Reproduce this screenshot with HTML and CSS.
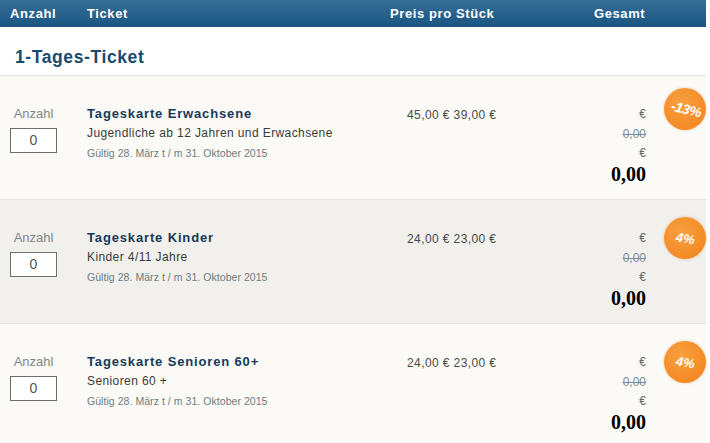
FILE: index.html
```html
<!DOCTYPE html>
<html lang="de">
<head>
<meta charset="utf-8">
<title>Tickets</title>
<link rel="stylesheet" href="styles.css">
</head>
<body>
<div class="page">
  <div class="thead">
    <div class="th">Anzahl</div>
    <div class="th">Ticket</div>
    <div class="th">Preis pro Stück</div>
    <div class="th">Gesamt</div>
  </div>
  <h2 class="group">1-Tages-Ticket</h2>

  <div class="row light">
    <div class="qty">
      <div class="qty-label">Anzahl</div>
      <div class="qty-box">0</div>
    </div>
    <div class="ticket">
      <div class="t-title">Tageskarte Erwachsene</div>
      <div class="t-sub">Jugendliche ab 12 Jahren und Erwachsene</div>
      <div class="t-valid">Gültig 28. März t / m 31. Oktober 2015</div>
    </div>
    <div class="price">45,00 € 39,00 €</div>
    <div class="total">
      <div class="cur">€</div>
      <div class="old">0,00</div>
      <div class="cur">€</div>
      <div class="sum">0,00</div>
    </div>
    <div class="badge-cell"><div class="badge badge-a"><span>-13%</span></div></div>
  </div>

  <div class="row dark">
    <div class="qty">
      <div class="qty-label">Anzahl</div>
      <div class="qty-box">0</div>
    </div>
    <div class="ticket">
      <div class="t-title">Tageskarte Kinder</div>
      <div class="t-sub">Kinder 4/11 Jahre</div>
      <div class="t-valid">Gültig 28. März t / m 31. Oktober 2015</div>
    </div>
    <div class="price">24,00 € 23,00 €</div>
    <div class="total">
      <div class="cur">€</div>
      <div class="old">0,00</div>
      <div class="cur">€</div>
      <div class="sum">0,00</div>
    </div>
    <div class="badge-cell"><div class="badge badge-b"><span>4%</span></div></div>
  </div>

  <div class="row light">
    <div class="qty">
      <div class="qty-label">Anzahl</div>
      <div class="qty-box">0</div>
    </div>
    <div class="ticket">
      <div class="t-title">Tageskarte Senioren 60+</div>
      <div class="t-sub">Senioren 60 +</div>
      <div class="t-valid">Gültig 28. März t / m 31. Oktober 2015</div>
    </div>
    <div class="price">24,00 € 23,00 €</div>
    <div class="total">
      <div class="cur">€</div>
      <div class="old">0,00</div>
      <div class="cur">€</div>
      <div class="sum">0,00</div>
    </div>
    <div class="badge-cell"><div class="badge badge-b"><span>4%</span></div></div>
  </div>
</div>
</body>
</html>
```

FILE: styles.css
```css
html, body {
  margin: 0;
  padding: 0;
  background: #ffffff;
}
body {
  font-family: "Liberation Sans", Arial, sans-serif;
  color: #444;
  overflow: hidden;
}
.page {
  width: 706px;
}
.thead {
  display: grid;
  grid-template-columns: 87px 303px 204px 1fr;
  height: 27px;
  align-items: center;
  background: linear-gradient(#366e97, #1a5582);
}
.th {
  color: #ffffff;
  font-weight: bold;
  font-size: 13px;
  letter-spacing: 0.6px;
  line-height: 16px;
}
.th:first-child {
  padding-left: 10px;
}
.group {
  margin: 0;
  padding: 20px 0 8px 15px;
  font-size: 17.5px;
  line-height: 20px;
  font-weight: bold;
  color: #184a70;
  letter-spacing: 0.6px;
  border-bottom: 1px solid #e6e3dc;
}
.row {
  display: grid;
  grid-template-columns: 87px 320px 150px 89px 60px;
  height: 93px;
  padding-top: 30px;
  border-bottom: 1px solid #e6e4de;
}
.light { background: #fbfaf7; }
.dark { background: #f1f0ed; }
.qty {
  padding-left: 10px;
}
.qty-label {
  width: 47px;
  text-align: center;
  font-size: 13px;
  line-height: 16px;
  color: #858585;
}
.qty-box {
  margin-top: 6px;
  width: 45px;
  height: 23px;
  border: 1px solid #6d6d6d;
  background: #ffffff;
  text-align: center;
  font-size: 14px;
  line-height: 23px;
  color: #555;
}
.t-title {
  font-size: 13px;
  line-height: 16px;
  font-weight: bold;
  color: #15395a;
  letter-spacing: 0.85px;
}
.t-sub {
  font-size: 12px;
  line-height: 21px;
  padding-top: 1px;
  color: #3b3b3b;
  letter-spacing: 0.4px;
}
.t-valid {
  font-size: 10.5px;
  line-height: 18px;
  color: #6e7c82;
  letter-spacing: 0.05px;
}
.price {
  font-size: 12px;
  line-height: 16px;
  color: #4a4a4a;
  padding-top: 1px;
  letter-spacing: 0.4px;
}
.total {
  text-align: right;
  color: #666;
  font-size: 12px;
}
.cur {
  line-height: 19px;
  margin-top: -1px;
}
.old {
  line-height: 21px;
  color: #7c8c92;
  text-decoration: line-through;
}
.sum {
  font-family: "Liberation Serif", "Times New Roman", serif;
  font-weight: bold;
  font-size: 20px;
  line-height: 22px;
  color: #000;
}
.badge-cell {
  padding-left: 18px;
}
.badge {
  width: 42px;
  height: 42px;
  border-radius: 50%;
  background: radial-gradient(circle at 40% 35%, #f9a040, #f48a25 70%);
  box-shadow: 0 0 3px rgba(200, 110, 30, 0.35);
  display: flex;
  align-items: center;
  justify-content: center;
  color: #ffffff;
  font-weight: bold;
  font-size: 14px;
}
.badge-a {
  margin-top: -18px;
}
.badge-b {
  margin-top: -13px;
}
.badge-a span {
  display: inline-block;
  font-style: italic;
  transform: rotate(14deg);
  letter-spacing: -0.6px;
  margin-left: 2px;
}
.badge-b span {
  display: inline-block;
  font-style: italic;
  transform: rotate(10deg);
  font-size: 13px;
}
```
